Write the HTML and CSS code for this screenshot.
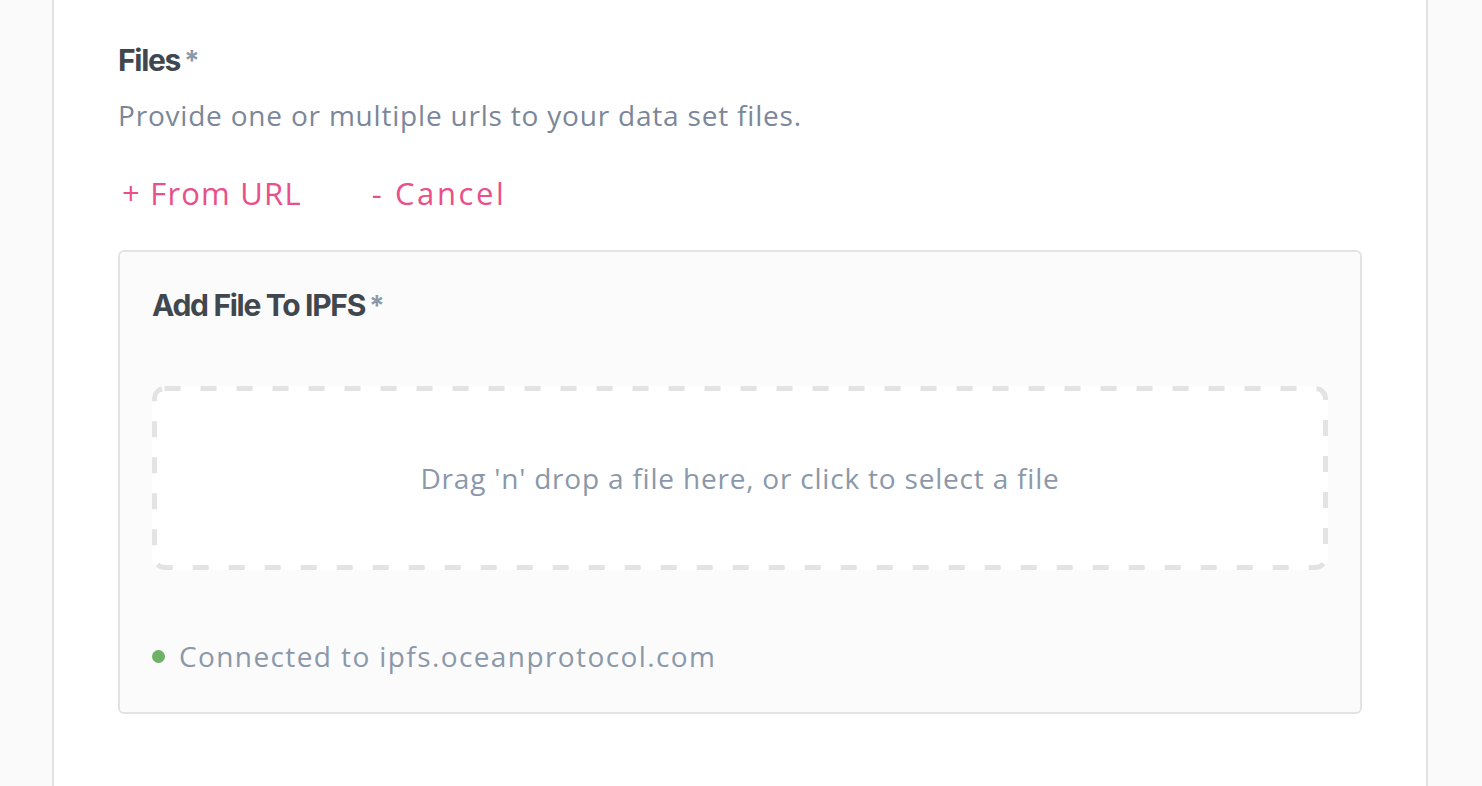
FILE: index.html
```html
<!DOCTYPE html>
<html lang="en">
<head>
<meta charset="utf-8">
<title>Files</title>
<link rel="stylesheet" href="styles.css">
</head>
<body>
<div class="page">
  <section class="panel">
    <div class="field">
      <label class="label">Files<span class="req">*</span></label>
      <p class="help">Provide one or multiple urls to your data set files.</p>
      <div class="actions">
        <button class="link" type="button">+ From URL</button>
        <button class="link link-cancel" type="button">- Cancel</button>
      </div>
      <div class="box">
        <label class="label">Add File To IPFS<span class="req">*</span></label>
        <div class="dropzone">Drag 'n' drop a file here, or click to select a file</div>
        <div class="status"><span class="dot"></span>Connected to ipfs.oceanprotocol.com</div>
      </div>
    </div>
  </section>
</div>
</body>
</html>
```
FILE: styles.css
```css
html, body {
  margin: 0;
  padding: 0;
  background: #fafafa;
  height: 100%;
}
body {
  font-family: "Open Sans", "Liberation Sans", sans-serif;
  color: #8b98a9;
}
.page {
  height: 100%;
  padding-left: 52px;
  width: 1376px;
}
.panel {
  box-sizing: border-box;
  height: 100%;
  background: #fff;
  border-left: 2px solid #e3e3e3;
  border-right: 2px solid #e3e3e3;
  padding: 40px 64px 0;
}
.label {
  display: block;
  font-family: "Inter", "Liberation Sans", sans-serif;
  font-weight: 700;
  font-size: 30px;
  letter-spacing: -1.3px;
  color: #41474e;
  line-height: 40px;
}
.req {
  color: #8b98a9;
  font-size: 28px;
  font-weight: 700;
  margin-left: 4px;
  letter-spacing: 0;
}
.help {
  margin: 16px 0 0;
  font-size: 28px;
  letter-spacing: 0.8px;
  line-height: 36px;
  color: #7b8799;
}
.actions {
  display: flex;
  gap: 70px;
  margin-top: 42px;
  padding-left: 4px;
}
.link {
  background: none;
  border: 0;
  padding: 0;
  font-family: "Open Sans", "Liberation Sans", sans-serif;
  font-size: 31px;
  letter-spacing: 1.2px;
  line-height: 36px;
  color: #e9508a;
  cursor: pointer;
}
.link-cancel {
  letter-spacing: 2.6px;
}
.box {
  margin-top: 39px;
  box-sizing: border-box;
  width: 1244px;
  height: 464px;
  background: #fbfbfb;
  border: 2px solid #e3e3e3;
  border-radius: 6px;
  padding: 33px 32px 0;
}
.dropzone {
  margin-top: 60px;
  box-sizing: border-box;
  width: 1176px;
  height: 184px;
  background-color: #fff;
  background-image: url("data:image/svg+xml,%3Csvg xmlns='http://www.w3.org/2000/svg' width='1176' height='184'%3E%3Crect x='2.5' y='2.5' width='1171' height='179' rx='10' fill='none' stroke='%23e3e3e3' stroke-width='5' stroke-dasharray='16 20'/%3E%3C/svg%3E");
  background-repeat: no-repeat;
  border-radius: 12px;
  display: flex;
  align-items: center;
  justify-content: center;
  font-size: 28px;
  letter-spacing: 0.8px;
  color: #8b98a9;
}
.status {
  margin-top: 68px;
  display: flex;
  align-items: center;
  gap: 14px;
  font-size: 28px;
  letter-spacing: 1.4px;
  line-height: 36px;
  color: #8b98a9;
}
.dot {
  flex: none;
  width: 13px;
  height: 13px;
  border-radius: 50%;
  background: #6fb166;
}
```
